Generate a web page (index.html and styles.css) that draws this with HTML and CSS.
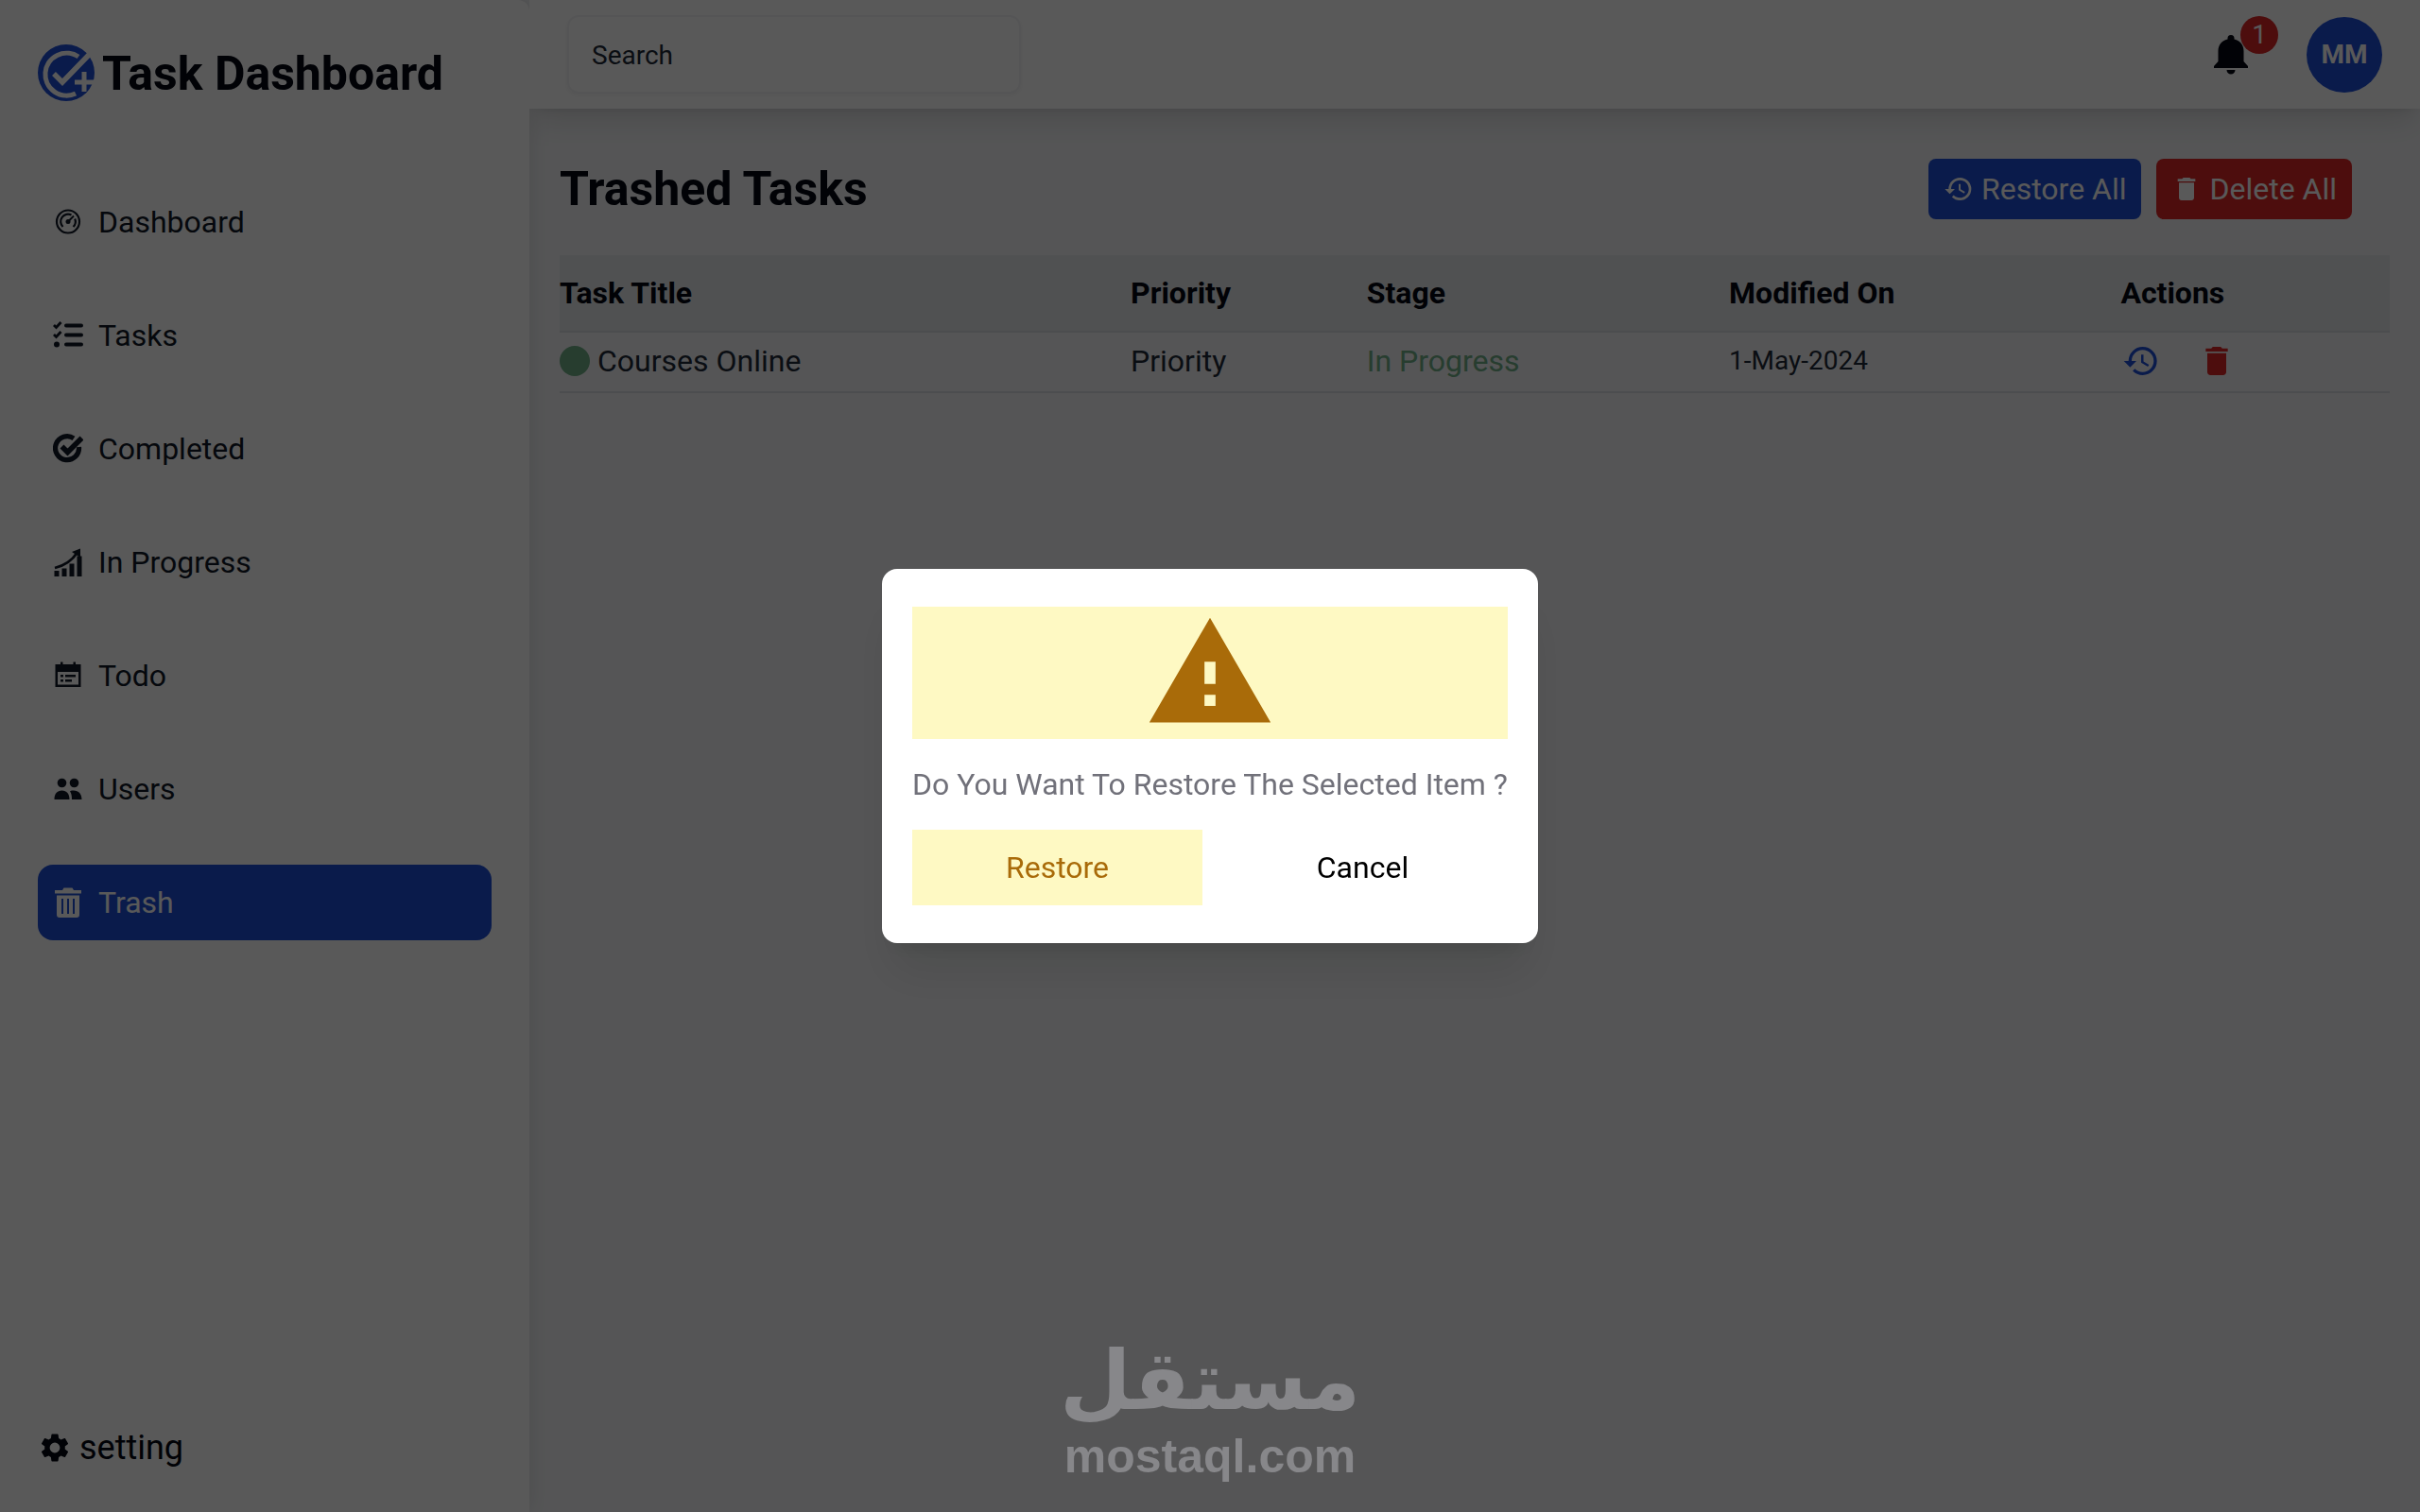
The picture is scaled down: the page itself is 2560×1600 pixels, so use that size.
FILE: index.html
```html
<!DOCTYPE html>
<html lang="en">
<head>
    <meta charset="UTF-8">
    <meta name="viewport" content="width=device-width, initial-scale=1.0">
    <title>Task Dashboard</title>
    <link rel="stylesheet" href="styles.css">
</head>
<body>

    <div class="layout">
        <!-- Sidebar -->
        <aside class="sidebar">
            <div class="brand">
                <svg class="brand-icon" viewBox="0 0 64 64">
                    <circle cx="30" cy="31" r="30" fill="#1d4ed8"/>
                    <path d="M43 14A22.500 22.500 0 1 0 40 53" fill="none" stroke="#fff" stroke-width="5"/>
                    <path d="M17 32l9 9 29-30" fill="none" stroke="#fff" stroke-width="5.500"/>
                    <path d="M49 30v21M39 41h22" fill="none" stroke="#fff" stroke-width="5"/>
                </svg>
                <h1 class="title">Task Dashboard</h1>
            </div>

            <nav class="menu">
                <a href="#" class="menu-link">
                    <svg class="icon" viewBox="0 0 32 32" fill="none" stroke="currentColor" stroke-width="2.200">
                        <circle cx="16" cy="15.500" r="12"/>
                        <path d="M10.500 21A7.800 7.800 0 0 1 19.500 8.500M23.200 12.500a7.800 7.800 0 0 1-1.700 8.500"/>
                        <path d="M16 15.500l6-6" stroke-width="2"/>
                        <circle cx="16" cy="15.500" r="2.500" fill="currentColor" stroke="none"/>
                    </svg>
                    Dashboard
                </a>
                <a href="#" class="menu-link">
                    <svg class="icon" viewBox="0 0 32 32" fill="none" stroke="currentColor">
                        <path d="M1 5l2.500 2.500L8.500 2M1 15l2.500 2.500L8.500 12" stroke-width="2.800"/>
                        <circle cx="4" cy="25.500" r="3" fill="currentColor" stroke="none"/>
                        <path d="M14 5.500h16M14 15.500h16M14 25.500h16" stroke-width="4" stroke-linecap="round"/>
                    </svg>
                    Tasks
                </a>
                <a href="#" class="menu-link">
                    <svg class="icon" viewBox="0 0 32 32" fill="none" stroke="currentColor">
                        <path d="M22 4.800A12.500 12.500 0 1 0 27.500 14" stroke-width="5.200"/>
                        <path d="M9.500 13.500l6 6L30.500 4.500" stroke-width="5.600"/>
                    </svg>
                    Completed
                </a>
                <a href="#" class="menu-link">
                    <svg class="icon" viewBox="0 0 32 32" fill="currentColor">
                        <path d="M1.500 25h5v6h-5zM9.500 22.500h5v8.500h-5zM17.500 17.500h5v13.500h-5zM25.500 9.500h5v21.500h-5z"/>
                        <path d="M2 22C12 19.500 20 14.500 25.500 6" fill="none" stroke="currentColor" stroke-width="2.800"/>
                        <path d="M20 5L29 1.500V11z"/>
                    </svg>
                    In Progress
                </a>
                <a href="#" class="menu-link">
                    <svg class="icon" viewBox="0 0 32 32" fill="currentColor">
                        <path d="M2.500 4H8V1.500h2.500V4h11V1.500H24V4h5.500v24h-27zM5 12v13.500h22V12z" fill-rule="evenodd"/>
                        <path d="M8 15h3v2.500H8zM13 15h11v2.500H13zM8 20h3v2.500H8zM13 20h7v2.500h-7z"/>
                    </svg>
                    Todo
                </a>
                <a href="#" class="menu-link">
                    <svg class="icon" viewBox="0 0 32 32" fill="currentColor">
                        <circle cx="9.500" cy="9.500" r="4.800"/>
                        <circle cx="22.500" cy="9.500" r="4.800"/>
                        <path d="M1.500 27c0-6 3-9.500 8-9.500s8 3.500 8 9.500zM19 17.800c7-1.500 11.500 2.500 11.500 9.200H20c0-4-.5-6.500-2-8.500z"/>
                    </svg>
                    Users
                </a>
                <a href="#" class="menu-link active">
                    <svg class="icon" viewBox="0 0 32 32" fill="currentColor">
                        <path d="M2 3h8l1.500-2.500h9L22 3h8v3.500H2z"/>
                        <path d="M4 8.500h24V29a3 3 0 0 1-3 3H7a3 3 0 0 1-3-3zM9 12v16h2V12zM15 12v16h2V12zM21 12v16h2V12z" fill-rule="evenodd"/>
                    </svg>
                    Trash
                </a>
            </nav>

            <a href="#" class="setting">
                <svg class="setting-icon" viewBox="0 0 24 24" fill="currentColor">
                    <path d="M19.140 12.940c.04-.3.060-.61.060-.94 0-.32-.02-.64-.07-.94l2.030-1.580c.18-.14.23-.41.12-.61l-1.920-3.320c-.12-.22-.37-.29-.59-.22l-2.390.96c-.5-.38-1.030-.7-1.620-.94L14.400 2.810c-.04-.24-.24-.41-.48-.41h-3.840c-.24 0-.43.17-.47.41L9.250 5.350c-.59.24-1.130.57-1.620.94l-2.390-.96c-.22-.08-.47 0-.59.22L2.740 8.870c-.12.21-.08.47.12.61l2.030 1.580c-.05.3-.09.63-.09.94s.02.64.07.94l-2.030 1.580c-.18.14-.23.41-.12.61l1.920 3.320c.12.22.37.29.59.22l2.390-.96c.5.38 1.030.7 1.620.94l.36 2.540c.05.24.24.41.48.41h3.840c.24 0 .44-.17.47-.41l.36-2.540c.59-.24 1.130-.56 1.620-.94l2.390.96c.22.08.47 0 .59-.22l1.920-3.320c.12-.22.07-.47-.12-.61zM12 15.600A3.600 3.600 0 1 1 12 8.400a3.600 3.600 0 0 1 0 7.200z"/>
                </svg>
                setting
            </a>
        </aside>

        <div class="content">
            <!-- Top bar -->
            <header class="topbar">
                <input type="text" class="search" placeholder="Search" aria-label="Search">
                <div class="user">
                    <button class="bell" aria-label="Notifications">
                        <svg class="bell-icon" viewBox="0 0 36 42" fill="currentColor">
                            <path d="M18 0a3.500 3.500 0 0 0-3.500 3.500v1C8 6 4.500 11 4.500 17v11L0 33v2h36v-2l-4.500-5V17c0-6-3.500-11-10-12.500v-1A3.500 3.500 0 0 0 18 0zM13.500 37a4.500 4.500 0 0 0 9 0z"/>
                        </svg>
                        <span class="badge">1</span>
                    </button>
                    <button class="avatar">MM</button>
                </div>
            </header>

            <!-- Trashed tasks -->
            <main class="main">
                <div class="main-head">
                    <h2 class="title">Trashed Tasks</h2>
                    <div class="main-actions">
                        <button class="btn btn-restore">
                            <svg class="icon" viewBox="0 0 24 24" fill="currentColor"><path d="M13 3a9 9 0 0 0-9 9H1l3.890 3.890.07.14L9 12H6c0-3.870 3.130-7 7-7s7 3.130 7 7-3.130 7-7 7c-1.930 0-3.680-.79-4.940-2.060l-1.420 1.420A8.954 8.954 0 0 0 13 21a9 9 0 0 0 0-18zm-1 5v5l4.280 2.540.72-1.210-3.500-2.080V8H12z"/></svg>
                            Restore All
                        </button>
                        <button class="btn btn-delete">
                            <svg class="icon" viewBox="0 0 24 24" fill="currentColor"><path d="M6 19c0 1.100.9 2 2 2h8c1.100 0 2-.9 2-2V7H6v12zM19 4h-3.500l-1-1h-5l-1 1H5v2h14V4z"/></svg>
                            Delete All
                        </button>
                    </div>
                </div>

                <table class="tasks">
                    <thead>
                        <tr>
                            <th class="col-title">Task Title</th>
                            <th class="col-priority">Priority</th>
                            <th class="col-stage">Stage</th>
                            <th class="col-date">Modified On</th>
                            <th>Actions</th>
                        </tr>
                    </thead>
                    <tbody>
                        <tr>
                            <td><div class="task-name"><span class="dot"></span>Courses Online</div></td>
                            <td>Priority</td>
                            <td class="stage">In Progress</td>
                            <td class="date">1-May-2024</td>
                            <td>
                                <div class="row-actions">
                                    <button class="icon-btn restore" aria-label="Restore">
                                        <svg viewBox="0 0 24 24" fill="currentColor"><path d="M13 3a9 9 0 0 0-9 9H1l3.890 3.890.07.14L9 12H6c0-3.870 3.130-7 7-7s7 3.130 7 7-3.130 7-7 7c-1.930 0-3.680-.79-4.940-2.060l-1.420 1.420A8.954 8.954 0 0 0 13 21a9 9 0 0 0 0-18zm-1 5v5l4.280 2.540.72-1.210-3.500-2.080V8H12z"/></svg>
                                    </button>
                                    <button class="icon-btn delete" aria-label="Delete">
                                        <svg viewBox="0 0 24 24" fill="currentColor"><path d="M6 19c0 1.100.9 2 2 2h8c1.100 0 2-.9 2-2V7H6v12zM19 4h-3.500l-1-1h-5l-1 1H5v2h14V4z"/></svg>
                                    </button>
                                </div>
                            </td>
                        </tr>
                    </tbody>
                </table>
            </main>
        </div>
    </div>

    <!-- Restore dialog -->
    <div class="overlay">
        <div class="modal" role="dialog" aria-modal="true" aria-labelledby="modal-text">
            <div class="modal-banner">
                <svg class="modal-icon" viewBox="0 0 24 24" fill="currentColor"><path d="M1 21h22L12 2 1 21zm12-3h-2v-2h2v2zm0-4h-2v-4h2v4z"/></svg>
            </div>
            <p class="modal-text" id="modal-text">Do You Want To Restore The Selected Item ?</p>
            <div class="modal-buttons">
                <button class="modal-btn confirm">Restore</button>
                <button class="modal-btn">Cancel</button>
            </div>
        </div>
    </div>

    <!-- Watermark -->
    <div class="watermark">
        <span class="watermark-ar" lang="ar" dir="rtl">مستقل</span>
        <span class="watermark-en">mostaql.com</span>
    </div>

</body>
</html>
```
FILE: styles.css
```css
/* Reset styles */
* {
    margin: 0;
    padding: 0;
    box-sizing: border-box;
}

body {
    font-family: Roboto, sans-serif;
    font-size: 32px;
    line-height: 48px;
    color: #111827;
    background-color: #f3f4f6;
}

button, input {
    font: inherit;
    color: inherit;
    border: none;
    background: none;
}

button {
    cursor: pointer;
}

a {
    color: inherit;
    text-decoration: none;
}

svg {
    display: block;
    flex-shrink: 0;
}

.icon {
    width: 32px;
    height: 32px;
}

.title {
    font-size: 50px;
    line-height: 64px;
    font-weight: 700;
    color: #030712;
}

.layout {
    display: flex;
    min-height: 100vh;
}

/* Sidebar */
.sidebar {
    width: 560px;
    flex-shrink: 0;
    display: flex;
    flex-direction: column;
    padding: 46px 40px 44px;
    background-color: #fff;
    border-top-right-radius: 12px;
    box-shadow: 0 0 24px rgba(0, 0, 0, 0.1);
}

.brand {
    display: flex;
    align-items: center;
    gap: 4px;
}

.brand-icon {
    width: 64px;
    height: 64px;
}

.menu {
    display: flex;
    flex-direction: column;
    gap: 40px;
    margin-top: 85px;
}

.menu-link {
    display: flex;
    align-items: center;
    gap: 16px;
    padding: 16px;
    border-radius: 16px;
}

.menu-link.active {
    background-color: #1d4ed8;
    color: #fff;
}

.setting {
    display: flex;
    align-items: center;
    gap: 8px;
    margin-top: auto;
    font-size: 36px;
    color: #030712;
}

.setting-icon {
    width: 36px;
    height: 36px;
}

/* Top bar */
.content {
    flex: 1;
    overflow: hidden;
}

.topbar {
    display: flex;
    justify-content: space-between;
    align-items: center;
    padding: 16px 40px;
    background-color: #fff;
    box-shadow: 0 20px 30px -6px rgba(0, 0, 0, 0.1), 0 8px 12px -8px rgba(0, 0, 0, 0.1);
}

.search {
    width: 480px;
    height: 83px;
    padding: 2px 24px 0;
    font-size: 28px;
    border: 2px solid #f3f4f6;
    border-radius: 12px;
    box-shadow: 0 2px 4px rgba(0, 0, 0, 0.05);
}

.search::placeholder {
    color: #1f2937;
    opacity: 1;
}

.user {
    display: flex;
    align-items: center;
    gap: 62px;
}

.bell {
    position: relative;
    color: #030712;
}

.bell-icon {
    width: 36px;
    height: 42px;
}

.badge {
    position: absolute;
    top: -20px;
    right: -32px;
    width: 40px;
    height: 40px;
    border-radius: 50%;
    background-color: #dc2626;
    color: #fff;
    font-size: 28px;
    line-height: 40px;
}

.avatar {
    width: 80px;
    height: 80px;
    border-radius: 50%;
    background-color: #1d4ed8;
    color: #fff;
    font-size: 28px;
    font-weight: 700;
}

/* Trashed tasks */
.main {
    padding: 53px 32px;
}

.main-head {
    display: flex;
    justify-content: space-between;
    align-items: center;
    padding-right: 40px;
    margin-bottom: 38px;
}

.main-actions {
    display: flex;
    gap: 16px;
}

.btn {
    display: flex;
    align-items: center;
    gap: 8px;
    padding: 8px 16px;
    border-radius: 8px;
    color: #fff;
}

.btn-restore {
    background-color: #1d4ed8;
}

.btn-delete {
    background-color: #dc2626;
}

.tasks {
    width: 100%;
    table-layout: fixed;
    border-collapse: collapse;
    text-align: left;
    color: #1f2937;
}

.tasks tr {
    border-bottom: 2px solid #d9dce1;
}

.tasks thead {
    background-color: #e5e7eb;
    color: #030712;
}

.tasks th {
    padding: 16px 0;
    font-weight: 700;
}

.tasks td {
    padding: 6px 0 8px;
}

.col-title {
    width: 31.200%;
}

.col-priority {
    width: 12.900%;
}

.col-stage {
    width: 19.800%;
}

.col-date {
    width: 21.400%;
}

.task-name {
    display: flex;
    align-items: center;
    gap: 8px;
}

.dot {
    width: 32px;
    height: 32px;
    border-radius: 50%;
    background-color: #6fae87;
}

.tasks .stage {
    color: #6fae87;
}

.tasks .date {
    font-size: 28px;
}

.row-actions {
    display: flex;
    gap: 40px;
    padding: 0 2px;
}

.icon-btn {
    width: 40px;
    height: 40px;
}

.icon-btn.restore {
    color: #1d4ed8;
}

.icon-btn.delete {
    color: #dc2626;
}

/* Dialog */
.overlay {
    position: fixed;
    inset: 0;
    display: flex;
    justify-content: center;
    align-items: center;
    background-color: rgba(0, 0, 0, 0.65);
}

.modal {
    padding: 40px 32px;
    border-radius: 16px;
    background-color: #fff;
    box-shadow: 0 40px 50px -10px rgba(0, 0, 0, 0.1), 0 16px 20px -12px rgba(0, 0, 0, 0.1);
}

.modal-banner {
    display: flex;
    justify-content: center;
    background-color: #fef9c3;
    color: #a96b09;
}

.modal-icon {
    width: 140px;
    height: 140px;
}

.modal-text {
    margin: 24px 0;
    color: #71717a;
}

.modal-buttons {
    display: grid;
    grid-template-columns: 1fr 1fr;
    gap: 16px;
}

.modal-btn {
    padding: 16px;
    color: #000;
}

.modal-btn.confirm {
    background-color: #fef9c3;
    color: #a96b09;
}

/* Watermark */
.watermark {
    position: fixed;
    left: 0;
    right: 0;
    bottom: 30px;
    display: flex;
    flex-direction: column;
    align-items: center;
    color: #87878a;
    font-weight: 700;
    pointer-events: none;
}

.watermark-ar {
    font-family: "DejaVu Sans", sans-serif;
    font-size: 87px;
    line-height: 102px;
}

.watermark-en {
    font-family: "Liberation Sans", Arial, sans-serif;
    font-size: 50px;
    line-height: 58px;
}
```
